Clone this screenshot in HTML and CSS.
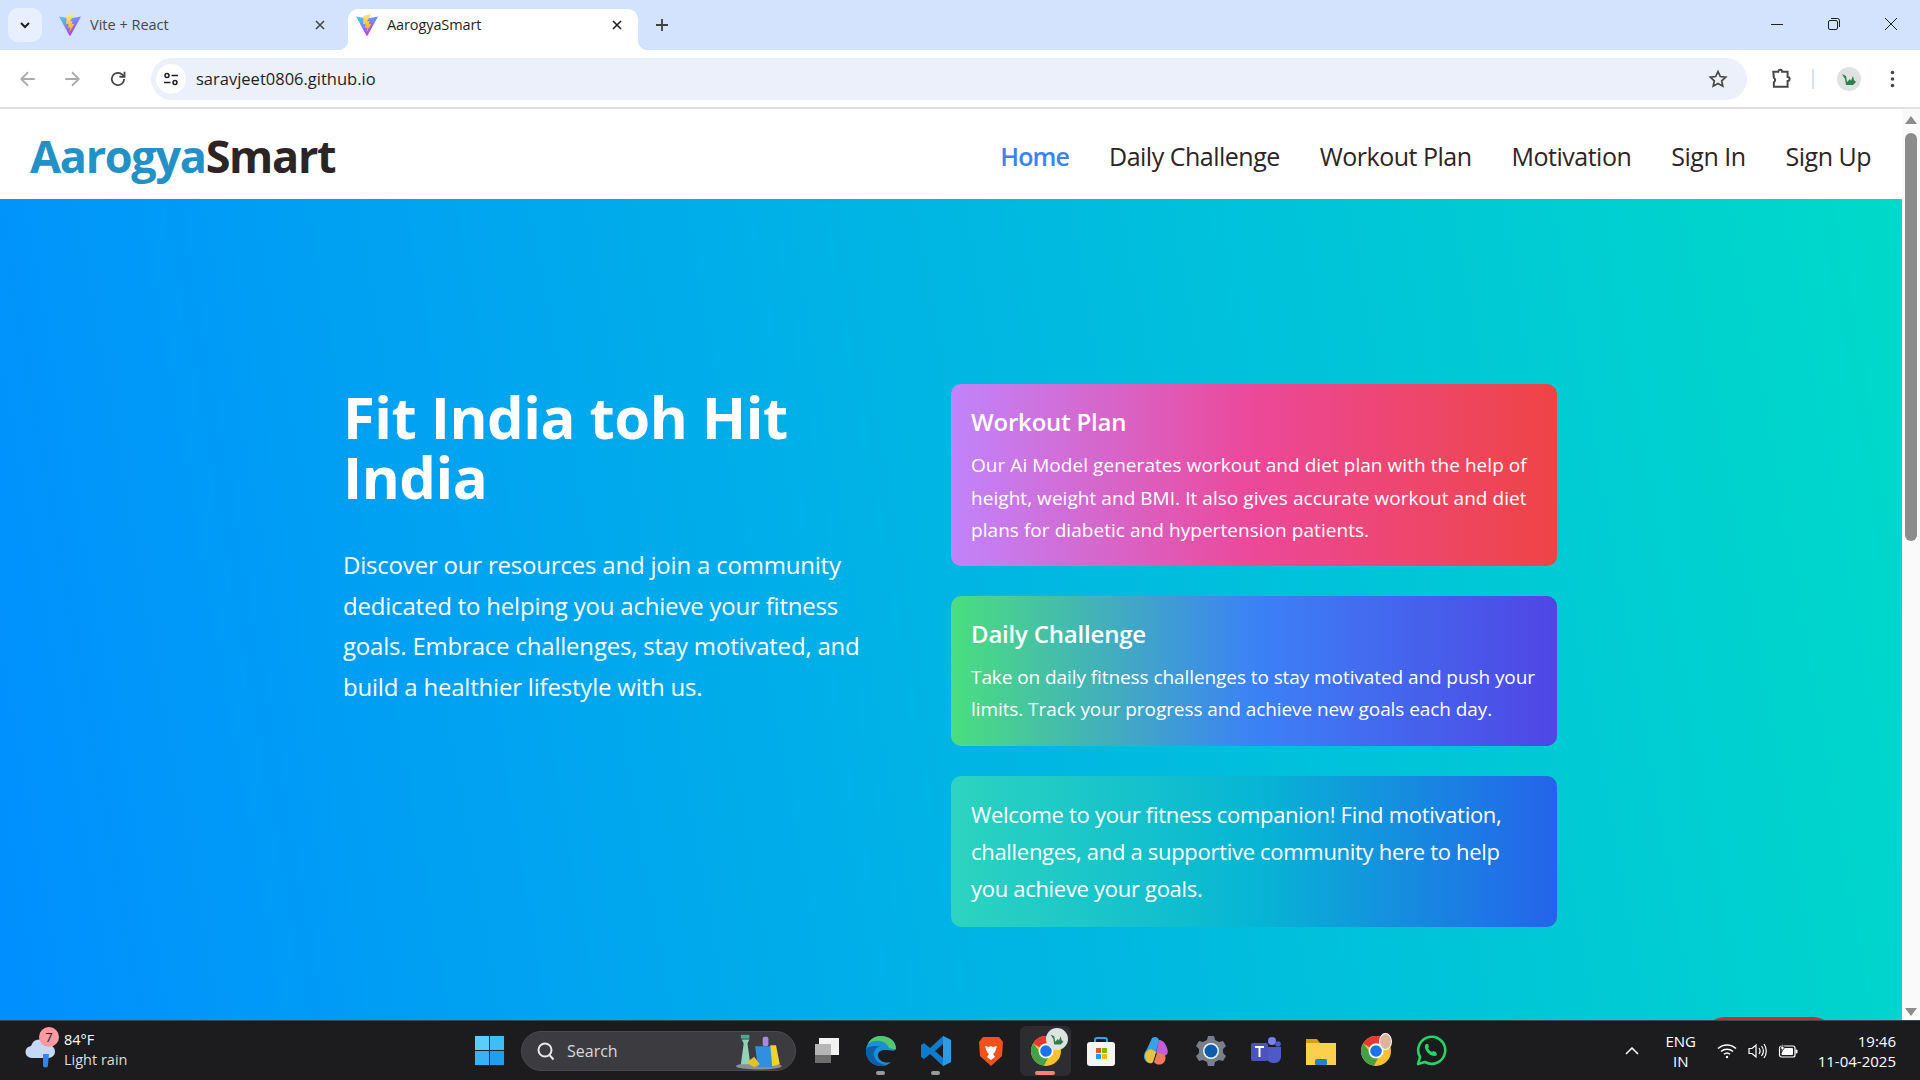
FILE: index.html
```html
<!DOCTYPE html>
<html lang="en">
<head>
  <meta charset="UTF-8">
  <title>AarogyaSmart</title>
  <link rel="stylesheet" href="styles.css">
</head>
<body>
  <svg class="defs" width="0" height="0">
    <defs>
      <linearGradient id="viteBody" x1="0" y1="0" x2="0.6" y2="1">
        <stop offset="0" stop-color="#41d1ff"/>
        <stop offset="1" stop-color="#bd34fe"/>
      </linearGradient>
      <linearGradient id="viteBolt" x1="0.4" y1="0" x2="0.5" y2="1">
        <stop offset="0" stop-color="#ffea83"/>
        <stop offset="1" stop-color="#ffa800"/>
      </linearGradient>
      <symbol id="vite" viewBox="0 0 24 24">
        <path d="M1 3.500 12 5.500 23 3.500 12.600 22.600c-.3.500-.9.500-1.200 0z" fill="url(#viteBody)"/>
        <path d="M16.500 1 8.600 2.600l-.5 8.600 2.600-.5-.7 4.200 2.300-.5-1 5.200 5-8.800-2.700.5.800-3.200-2.600.4z" fill="url(#viteBolt)"/>
      </symbol>
      <symbol id="chrome" viewBox="0 0 32 32">
        <circle cx="16" cy="16" r="15" fill="#fbc02d"/>
        <path d="M16 1a15 15 0 0 1 13 7.500H16a7.500 7.500 0 0 0-6.500 3.750L3 8.500A15 15 0 0 1 16 1z" fill="#e53935"/>
        <path d="M3 8.500A15 15 0 0 0 13.800 30.800l6.500-11.300a7.500 7.500 0 0 1-10.800-3.500z" fill="#43a047"/>
        <circle cx="16" cy="16" r="7.500" fill="#fff"/>
        <circle cx="16" cy="16" r="5.800" fill="#1a73e8"/>
      </symbol>
      <symbol id="leaf" viewBox="0 0 24 24">
        <circle cx="12" cy="12" r="12" fill="#dfe3e0"/>
        <path d="M5 7l4 2 1 6 3-3 1 2 2-5 1 4 2 2-3 3H9l-1-6z" fill="#2f7d4f"/>
      </symbol>
    </defs>
  </svg>

  <!-- Browser tabs -->
  <div class="tabstrip">
    <button class="tab-search">
      <svg width="12" height="12" viewBox="0 0 12 12" fill="none" stroke="#1f1f1f" stroke-width="2"><path d="M2 4l4 4 4-4"/></svg>
    </button>
    <div class="tab">
      <svg class="favicon"><use href="#vite"/></svg>
      <span class="tab-title">Vite + React</span>
      <svg class="tab-close" viewBox="0 0 12 12" stroke="#45474a" stroke-width="1.600"><path d="M2 2l8 8M10 2l-8 8"/></svg>
    </div>
    <div class="tab tab-active">
      <svg class="favicon"><use href="#vite"/></svg>
      <span class="tab-title">AarogyaSmart</span>
      <svg class="tab-close" viewBox="0 0 12 12" stroke="#1f1f1f" stroke-width="1.600"><path d="M2 2l8 8M10 2l-8 8"/></svg>
    </div>
    <svg class="tab-new" viewBox="0 0 14 14" stroke="#3c4043" stroke-width="1.800"><path d="M7 1v12M1 7h12"/></svg>
    <div class="win-controls">
      <svg viewBox="0 0 14 14" stroke="#1f1f1f" fill="none"><path d="M1 7.500h12"/></svg>
      <svg viewBox="0 0 14 14" stroke="#1f1f1f" fill="none"><rect x="1.500" y="3.500" width="9" height="9" rx="1.500"/><path d="M4 1.500h6.500a2 2 0 0 1 2 2V10"/></svg>
      <svg viewBox="0 0 14 14" stroke="#1f1f1f" fill="none"><path d="M1 1l12 12M13 1L1 13"/></svg>
    </div>
  </div>

  <!-- Address bar -->
  <div class="toolbar">
    <svg class="tool tool-back" viewBox="0 0 16 16" fill="none" stroke="#a8abaf" stroke-width="1.600"><path d="M14 8H2M8 2L2 8l6 6"/></svg>
    <svg class="tool tool-fwd" viewBox="0 0 16 16" fill="none" stroke="#a8abaf" stroke-width="1.600"><path d="M2 8h12M8 2l6 6-6 6"/></svg>
    <svg class="tool tool-reload" viewBox="0 0 16 16" fill="none" stroke="#474747" stroke-width="1.600"><path d="M13.500 8a5.500 5.500 0 1 1-1.600-3.900L13.500 5.700"/><path d="M13.800 1.500v4.500H9.300"/></svg>
    <div class="omnibox">
      <span class="site-info">
        <svg viewBox="0 0 16 16" fill="none" stroke="#1f1f1f" stroke-width="1.500"><circle cx="4" cy="4.500" r="2"/><path d="M8.500 4.500H15M1 11.500h6.500"/><circle cx="12" cy="11.500" r="2"/></svg>
      </span>
      <span class="url">saravjeet0806.github.io</span>
      <svg class="star" viewBox="0 0 20 20" fill="none" stroke="#474747" stroke-width="1.700"><path d="M10 2.500l2.300 5 5.400.6-4 3.700 1.100 5.400-4.800-2.700-4.800 2.700 1.100-5.400-4-3.700 5.400-.6z"/></svg>
    </div>
    <svg class="puzzle" viewBox="0 0 20 20" fill="none" stroke="#474747" stroke-width="1.800"><path d="M3 3.500h4.500c0-2.500 3.500-2.500 3.500 0h5v4.700c2.400 0 2.400 3.600 0 3.600v5.200H3.500v-4c1.500-.6 1.500-3.500 0-4z"/></svg>
    <span class="tool-sep"></span>
    <svg class="avatar"><use href="#leaf"/></svg>
    <svg class="menu-dots" viewBox="0 0 4 18" fill="#474747"><circle cx="2" cy="2.500" r="1.800"/><circle cx="2" cy="9" r="1.800"/><circle cx="2" cy="15.500" r="1.800"/></svg>
  </div>

  <!-- Page -->
  <div class="viewport">
    <div class="page">
      <nav class="navbar">
        <a class="logo"><span class="logo-a">Aarogya</span>Smart</a>
        <div class="nav-links">
          <a class="nav-active">Home</a>
          <a>Daily Challenge</a>
          <a>Workout Plan</a>
          <a>Motivation</a>
          <a>Sign In</a>
          <a>Sign Up</a>
        </div>
      </nav>
      <main class="hero">
        <div class="hero-grid">
          <div class="hero-left">
            <h1>Fit India toh Hit India</h1>
            <p>Discover our resources and join a community dedicated to helping you achieve your fitness goals. Embrace challenges, stay motivated, and build a healthier lifestyle with us.</p>
          </div>
          <div class="hero-right">
            <div class="card card-workout">
              <h2>Workout Plan</h2>
              <p>Our Ai Model generates workout and diet plan with the help of height, weight and BMI. It also gives accurate workout and diet plans for diabetic and hypertension patients.</p>
            </div>
            <div class="card card-daily">
              <h2>Daily Challenge</h2>
              <p>Take on daily fitness challenges to stay motivated and push your limits. Track your progress and achieve new goals each day.</p>
            </div>
            <div class="card card-welcome">
              <p>Welcome to your fitness companion! Find motivation, challenges, and a supportive community here to help you achieve your goals.</p>
            </div>
          </div>
        </div>
        <span class="chat-btn"></span>
      </main>
    </div>
    <div class="scrollbar">
      <span class="arrow-up"></span>
      <span class="thumb"></span>
      <span class="arrow-down"></span>
    </div>
  </div>

  <!-- Windows taskbar -->
  <footer class="taskbar">
    <div class="weather">
      <span class="weather-icon">
        <svg viewBox="0 0 32 34"><path d="M8 24a6 6 0 0 1-1-12 9 9 0 0 1 17-1 6.500 6.500 0 0 1 1 13z" fill="#c5d8f8"/><path d="M19 20h6l-1 11a2.500 2.500 0 0 1-5 0z" fill="#2f86ee"/></svg>
        <span class="weather-badge">7</span>
      </span>
      <div class="weather-text">
        <span>84°F</span>
        <span>Light rain</span>
      </div>
    </div>

    <div class="task-center">
      <svg class="start" viewBox="0 0 32 32">
        <rect x="1" y="1" width="14.500" height="14.500" fill="#5bcdfb"/>
        <rect x="16.500" y="1" width="14.500" height="14.500" fill="#3fbdf7"/>
        <rect x="1" y="16.500" width="14.500" height="14.500" fill="#35b3f5"/>
        <rect x="16.500" y="16.500" width="14.500" height="14.500" fill="#1ea0ee"/>
      </svg>
      <div class="task-search">
        <svg viewBox="0 0 20 20" fill="none" stroke="#e8e8e8" stroke-width="2"><circle cx="9" cy="9" r="6.500"/><path d="M13.500 14l4 4.500"/></svg>
        <span>Search</span>
        <svg class="search-art" viewBox="0 0 56 40">
          <ellipse cx="30" cy="36" rx="24" ry="3.500" fill="#8b8f96"/>
          <path d="M12 8h8l-2 4 3 22H11l3-22z" fill="#8fd3b8"/>
          <rect x="11" y="3" width="9" height="4" fill="#4fa88b"/>
          <rect x="34" y="5" width="6" height="10" rx="2" fill="#a78bda"/>
          <path d="M26 15h22l-3 22H29z" fill="#2f8fe0"/>
          <path d="M42 14h6l4 20-8 2z" fill="#f4d12e"/>
          <path d="M17 32l8-6 6 8-6 3z" fill="#e2c22a"/>
        </svg>
      </div>
      <div class="task-icons">
        <span class="task-item">
          <svg viewBox="0 0 32 32"><rect x="9" y="3" width="20" height="17" fill="#f2f2f2"/><rect x="5" y="9" width="16" height="15" fill="#b5b5b5"/><rect x="5" y="20" width="16" height="8" fill="#6e6e6e"/></svg>
        </span>
        <span class="task-item has-dot">
          <svg viewBox="0 0 32 32"><path d="M16 1C7 1 1 8 1 16c0 8 6 15 15 15 5 0 8-2 10-4-6 2-13-1-13-7 0-3 3-5 7-5 6 0 10 2 11-1C31 6 24 1 16 1z" fill="#1b8fd6"/><path d="M31 14C31 6 24 1 16 1 10 1 5 4 3 9c3-3 8-4 12-3 5 1 8 4 9 7 3 1 6 1 7 1z" fill="#53c86d"/><path d="M1 16c0 8 6 15 15 15 2 0 4-.5 6-1-6 0-13-4-13-11 0-4 3-7 6-8-8 0-14 0-14 5z" fill="#0c5ea8"/></svg>
        </span>
        <span class="task-item has-dot">
          <svg viewBox="0 0 32 32"><path d="M23 1l8 4v22l-8 4L10 19l-6 5-3-2v-12l3-2 6 5z" fill="#0f7ccb"/><path d="M23 9l-8 7 8 7z" fill="#1c1c20"/><path d="M23 1l8 4v22l-8 4z" fill="#2a9be6"/></svg>
        </span>
        <span class="task-item">
          <svg viewBox="0 0 32 32"><path d="M8 2h16l4 5-1 14-11 10L5 21 4 7z" fill="#f1511b"/><path d="M10 11l4 1 2-1 2 1 4-1-2 6-2 2 2 3-4 3-4-3 2-3-2-2z" fill="#fff"/></svg>
        </span>
        <span class="task-item task-active">
          <svg class="chrome-icon"><use href="#chrome"/></svg>
          <svg class="badge-avatar"><use href="#leaf"/></svg>
        </span>
        <span class="task-item">
          <svg viewBox="0 0 32 32"><path d="M10 8V5a2 2 0 0 1 2-2h8a2 2 0 0 1 2 2v3" fill="none" stroke="#2ea3e6" stroke-width="2"/><rect x="2" y="7" width="28" height="24" rx="3" fill="#f5f5f5"/><rect x="11" y="13" width="5" height="5" fill="#e4572e"/><rect x="17" y="13" width="5" height="5" fill="#7fb800"/><rect x="11" y="19" width="5" height="5" fill="#1c9be6"/><rect x="17" y="19" width="5" height="5" fill="#f6bb1b"/></svg>
        </span>
        <span class="task-item">
          <svg viewBox="0 0 32 32"><path d="M12 3c3-2 7-1 7 3l-5 18c-1 4-7 5-9 1-2-3-1-7 2-11z" fill="#3aa0e8"/><path d="M5 20c1-5 5-7 8-5l3 2-3 10c-2 3-8 1-8-7z" fill="#e8c33c"/><path d="M19 5c3 0 6 2 8 8 2 5 0 8-4 8l-7-3z" fill="#c05fd6"/><path d="M14 27l3-9 6 1c4 1 3 8-1 10-3 1-6 1-8-2z" fill="#f07a5a"/></svg>
        </span>
        <span class="task-item">
          <svg viewBox="0 0 32 32"><path d="M13 1h6l1 4 4 2 4-1 3 5-3 3v4l3 3-3 5-4-1-4 2-1 4h-6l-1-4-4-2-4 1-3-5 3-3v-4l-3-3 3-5 4 1 4-2z" fill="#77808a"/><circle cx="16" cy="16" r="8" fill="#f2f2f2"/><circle cx="16" cy="16" r="6.500" fill="#0e5cab"/></svg>
        </span>
        <span class="task-item">
          <svg viewBox="0 0 32 32"><circle cx="22" cy="6" r="4" fill="#7b83eb"/><circle cx="28" cy="9" r="2.800" fill="#5059c9"/><path d="M16 12h15v10a6 6 0 0 1-6 6h-2a7 7 0 0 1-7-7z" fill="#5059c9"/><rect x="1" y="8" width="17" height="18" rx="2" fill="#4b53bc"/><path d="M5 12h9M9.500 12v10" stroke="#fff" stroke-width="2"/></svg>
        </span>
        <span class="task-item">
          <svg viewBox="0 0 32 32"><path d="M1 4h11l3 4h16v4H1z" fill="#d39f16"/><path d="M1 8h30v22H1z" fill="#fbd04d"/><rect x="10" y="24" width="12" height="6" rx="1.500" fill="#1b83d4"/></svg>
        </span>
        <span class="task-item">
          <svg class="chrome-icon"><use href="#chrome"/></svg>
          <span class="badge-face"></span>
        </span>
        <span class="task-item">
          <svg viewBox="0 0 32 32" fill="none"><path d="M3 29l2-7A13.500 13.500 0 1 1 10 27z" stroke="#25d366" stroke-width="2.600" stroke-linejoin="round"/><path d="M11 9c-2 2-1 6 2 9s7 4 9 2l-1-3-3-1-1 1c-2-1-3-2-4-4l1-1-1-3z" fill="#25d366"/></svg>
        </span>
      </div>
    </div>

    <div class="tray">
      <svg class="tray-chevron" viewBox="0 0 14 8" fill="none" stroke="#fff" stroke-width="1.500"><path d="M1 7l6-6 6 6"/></svg>
      <div class="tray-lang"><span>ENG</span><span>IN</span></div>
      <svg class="tray-icon tray-wifi" viewBox="0 0 20 16" fill="none" stroke="#fff" stroke-width="1.500"><path d="M1 5.500a13 13 0 0 1 18 0M4 8.500a9 9 0 0 1 12 0M7 11.300a4.500 4.500 0 0 1 6 0"/><circle cx="10" cy="14" r="1.200" fill="#fff" stroke="none"/></svg>
      <svg class="tray-icon tray-vol" viewBox="0 0 20 16" fill="none" stroke="#fff" stroke-width="1.200"><path d="M1 5.500h3L8 2v12l-4-3.500H1z"/><path d="M11 5c1.300 1.800 1.300 4.200 0 6M13.500 3c2.300 3 2.300 7 0 10M16 1c3 4 3 10 0 14"/></svg>
      <svg class="tray-icon tray-batt" viewBox="0 0 20 16"><rect x="1.500" y="3" width="15.500" height="11" rx="2" fill="#1c1c1f" stroke="#fff" stroke-width="1.200"/><rect x="3.500" y="5" width="11.500" height="7" rx="1" fill="#fff"/><rect x="17.500" y="6.500" width="2" height="4" rx="1" fill="#fff"/><path d="M5 0L2 6h2l-1 4 4-6H5z" fill="#fff" stroke="#1c1c1f" stroke-width=".8"/></svg>
      <div class="tray-clock"><span>19:46</span><span>11-04-2025</span></div>
    </div>
  </footer>
</body>
</html>
```

FILE: styles.css
```css
/* Reset */
* {
  margin: 0;
  padding: 0;
  box-sizing: border-box;
}

html, body {
  height: 100%;
  overflow: hidden;
}

body {
  display: flex;
  flex-direction: column;
  font-family: "Open Sans", "Noto Sans", sans-serif;
  background: #fff;
}

.defs {
  position: absolute;
}

/* Tab strip */
.tabstrip {
  height: 50px;
  flex: none;
  display: flex;
  align-items: flex-end;
  background: #d3e3fd;
  position: relative;
}

.tab-search {
  width: 34px;
  height: 34px;
  margin: 0 5px 8px 8px;
  border: none;
  border-radius: 10px;
  background: #e9f0fd;
  display: flex;
  align-items: center;
  justify-content: center;
}

.tab {
  width: 291px;
  height: 41px;
  margin-right: 10px;
  padding: 0 12px 10px 11px;
  display: flex;
  align-items: center;
  gap: 8px;
  font-size: 14.500px;
  color: #45474a;
  position: relative;
}

.tab-active {
  width: 290px;
  margin-right: 0;
  background: #fff;
  border-radius: 10px 10px 0 0;
  color: #1f1f1f;
  padding-left: 7px;
  padding-right: 15px;
  letter-spacing: -.1px;
}

.tab-active::before,
.tab-active::after {
  content: "";
  position: absolute;
  bottom: 0;
  width: 10px;
  height: 10px;
}

.tab-active::before {
  left: -10px;
  background: radial-gradient(circle at 0 0, transparent 10px, #fff 10.500px);
}

.tab-active::after {
  right: -10px;
  background: radial-gradient(circle at 100% 0, transparent 10px, #fff 10.500px);
}

.favicon {
  width: 24px;
  height: 24px;
  flex: none;
}

.tab-title {
  flex: 1;
}

.tab-close {
  width: 12px;
  height: 12px;
  flex: none;
}

.tab-new {
  width: 14px;
  height: 14px;
  margin: 0 0 18px 17px;
}

.win-controls {
  margin-left: auto;
  align-self: flex-start;
  display: flex;
  gap: 43px;
  padding: 17px 22px 0 0;
}

.win-controls svg {
  width: 14px;
  height: 14px;
}

/* Toolbar */
.toolbar {
  height: 59px;
  flex: none;
  display: flex;
  align-items: center;
  background: #fff;
  border-bottom: 2px solid #e0e0e0;
  border-radius: 10px 10px 0 0;
  position: relative;
}

.tool {
  width: 18px;
  height: 18px;
  flex: none;
}

.tool-back {
  margin-left: 19px;
}

.tool-fwd {
  margin-left: 26px;
}

.tool-reload {
  margin-left: 28px;
}

.omnibox {
  width: 1596px;
  height: 42px;
  margin-left: 24px;
  padding: 0 19px 0 5px;
  border-radius: 21px;
  background: #ebf0fa;
  display: flex;
  align-items: center;
}

.site-info {
  width: 30px;
  height: 30px;
  border-radius: 50%;
  background: #fff;
  display: flex;
  align-items: center;
  justify-content: center;
}

.site-info svg {
  width: 16px;
  height: 16px;
}

.url {
  margin-left: 10px;
  font-size: 16.500px;
  color: #1f1f1f;
  flex: 1;
}

.star {
  width: 20px;
  height: 20px;
}

.puzzle {
  width: 22px;
  height: 22px;
  margin-left: 23px;
}

.tool-sep {
  width: 2px;
  height: 20px;
  margin-left: 20px;
  background: #d3e3fd;
}

.avatar {
  width: 24px;
  height: 24px;
  margin-left: 23px;
}

.menu-dots {
  width: 5px;
  height: 18px;
  margin-left: 29px;
}

/* Page viewport */
.viewport {
  flex: 1;
  min-height: 0;
  display: flex;
}

.page {
  flex: 1;
  display: flex;
  flex-direction: column;
  min-width: 0;
}

.navbar {
  height: 90px;
  flex: none;
  padding: 3px 31px 0 30px;
  display: flex;
  align-items: center;
  justify-content: space-between;
  background: #fff;
}

.logo {
  font-size: 45px;
  font-weight: 700;
  letter-spacing: -1.300px;
  color: #2d2426;
}

.logo-a {
  color: #2391c6;
}

.nav-links {
  display: flex;
  gap: 40px;
}

.nav-links a {
  font-size: 25px;
  letter-spacing: -.5px;
  color: #2d2426;
}

.nav-links .nav-active {
  color: #3b82f6;
  font-weight: 600;
  letter-spacing: -.9px;
}

/* Hero */
.hero {
  flex: 1;
  background: linear-gradient(80deg, #008fff, #00dac9);
  padding: 185px 2px 0 0;
  position: relative;
  overflow: hidden;
}

.hero-grid {
  width: 1214px;
  margin: 0 auto;
  display: grid;
  grid-template-columns: 1fr 606px;
  gap: 64px;
}

.hero-left h1 {
  font-size: 58px;
  line-height: 60px;
  font-weight: 700;
  letter-spacing: -.5px;
  color: #fff;
  margin: 3px 0 38px;
}

.hero-left p {
  font-size: 24px;
  line-height: 40.600px;
  letter-spacing: -.2px;
  color: #fff;
}

.hero-right {
  display: flex;
  flex-direction: column;
  gap: 30px;
}

.card {
  padding: 20px 20px 19px;
  border-radius: 10px;
  color: #fff;
}

.card h2 {
  font-size: 24px;
  line-height: 35px;
  font-weight: 600;
  letter-spacing: -.2px;
  margin-bottom: 10px;
}

.card p {
  font-size: 19px;
  line-height: 32.500px;
}

.card-workout {
  background: linear-gradient(to right, #c084fc, #ec4899, #ef4444);
}

.card-workout p {
  letter-spacing: .05px;
}

.card-daily {
  background: linear-gradient(to right, #4ade80, #3b82f6, #4f46e5);
  padding-bottom: 20px;
}

.card-daily p {
  letter-spacing: -.08px;
}

.card-welcome {
  background: linear-gradient(to right, #2dd4bf, #06b6d4, #2563eb);
  padding: 20px;
}

.card-welcome p {
  font-size: 22px;
  line-height: 37px;
  letter-spacing: -.3px;
}

.chat-btn {
  position: absolute;
  right: 67px;
  bottom: -40px;
  width: 132px;
  height: 43px;
  border-radius: 22px;
  background: #dc2626;
}

/* Scrollbar */
.scrollbar {
  width: 18px;
  flex: none;
  background: #fafafa;
  display: flex;
  flex-direction: column;
  align-items: center;
  padding: 7px 0 4px;
}

.arrow-up,
.arrow-down {
  width: 0;
  height: 0;
  border-left: 6px solid transparent;
  border-right: 6px solid transparent;
  flex: none;
}

.arrow-up {
  border-bottom: 8px solid #8c8c8c;
}

.arrow-down {
  border-top: 8px solid #8c8c8c;
  margin-top: auto;
}

.thumb {
  width: 12px;
  height: 408px;
  margin-top: 9px;
  border-radius: 6px;
  background: #8c8c8c;
}

/* Taskbar */
.taskbar {
  height: 60px;
  flex: none;
  display: flex;
  align-items: center;
  position: relative;
  background: #1c1c1f;
  border-top: 1px solid #3a4750;
  color: #fff;
}

.weather {
  width: 474px;
  flex: none;
  padding-left: 24px;
  display: flex;
  align-items: center;
  gap: 8px;
}

.weather-icon {
  width: 32px;
  height: 34px;
  position: relative;
}

.weather-icon svg {
  width: 32px;
  height: 34px;
}

.weather-badge {
  position: absolute;
  top: -7px;
  left: 15px;
  width: 20px;
  height: 20px;
  border-radius: 50%;
  background: #ff9aa2;
  color: #1c1c1f;
  font-size: 13px;
  text-align: center;
  line-height: 20px;
}

.weather-text {
  display: flex;
  flex-direction: column;
  font-size: 14.500px;
  line-height: 20px;
  margin-top: -2px;
}

.weather-text span:last-child {
  color: #dcdcdc;
}

.task-center {
  display: flex;
  align-items: center;
}

.start {
  width: 31px;
  height: 31px;
}

.task-search {
  width: 275px;
  height: 40px;
  margin-left: 16px;
  padding: 0 10px 0 14px;
  border-radius: 20px;
  background: #3c3c40;
  border: 1px solid #4a4a4e;
  display: flex;
  align-items: center;
  gap: 11px;
  font-size: 16px;
  color: #d8d8d8;
}

.task-search > svg:first-child {
  width: 20px;
  height: 20px;
}

.task-search span {
  flex: 1;
}

.search-art {
  width: 56px;
  height: 38px;
}

.task-icons {
  display: flex;
  margin-left: 2px;
}

.task-item {
  width: 55px;
  height: 50px;
  position: relative;
  display: flex;
  align-items: center;
  justify-content: center;
}

.task-item svg {
  width: 32px;
  height: 32px;
}

.task-active {
  background: #2c2c31;
  border-radius: 6px;
  width: 51px;
  margin: 0 2px;
}

.task-active::after {
  content: "";
  position: absolute;
  bottom: 1px;
  left: 15px;
  width: 20px;
  height: 4px;
  border-radius: 2px;
  background: #f28572;
}

.has-dot::after {
  content: "";
  position: absolute;
  bottom: 1px;
  left: 23px;
  width: 9px;
  height: 4px;
  border-radius: 2px;
  background: #9a9a9a;
}

.task-item .badge-avatar {
  position: absolute;
  top: 2px;
  right: 3px;
  width: 22px;
  height: 22px;
}

.badge-face {
  position: absolute;
  top: 7px;
  right: 11px;
  width: 13px;
  height: 17px;
  border-radius: 50%;
  background: #d9b79c;
  border: 1px solid #fff;
}

/* System tray */
.tray {
  margin-left: auto;
  padding-right: 24px;
  display: flex;
  align-items: center;
}

.tray-chevron {
  width: 14px;
  height: 8px;
}

.tray-lang {
  width: 60px;
  margin-left: 12px;
  display: flex;
  flex-direction: column;
  align-items: center;
  font-size: 15px;
  line-height: 20px;
}

.tray-icon {
  width: 20px;
  height: 16px;
}

.tray-wifi {
  margin-left: 6px;
}

.tray-vol {
  margin-left: 11px;
}

.tray-batt {
  margin-left: 10px;
}

.tray-clock {
  margin-left: 20px;
  display: flex;
  flex-direction: column;
  align-items: flex-end;
  font-size: 15px;
  line-height: 20px;
}
```
